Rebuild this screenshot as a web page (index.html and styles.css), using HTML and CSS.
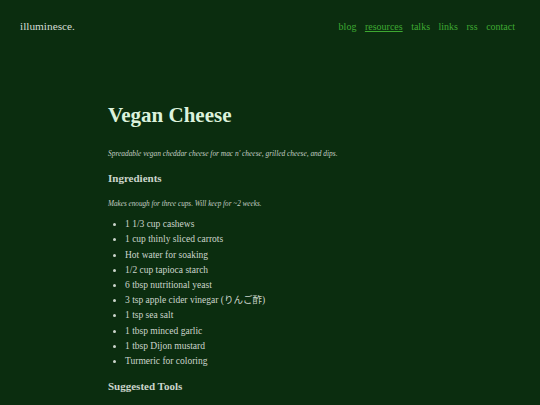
FILE: index.html
```html
<!DOCTYPE html>
<html lang="en">
<head>
<meta charset="utf-8">
<title>Vegan Cheese</title>
<link rel="stylesheet" href="styles.css">
</head>
<body>
<header class="site-header">
  <a class="logo" href="#">illuminesce.</a>
  <nav class="nav">
    <a href="#">blog</a>
    <a href="#" class="active">resources</a>
    <a href="#">talks</a>
    <a href="#">links</a>
    <a href="#">rss</a>
    <a href="#">contact</a>
  </nav>
</header>
<main class="content">
  <h1 class="title">Vegan Cheese</h1>
  <p class="lede">Spreadable vegan cheddar cheese for mac n' cheese, grilled cheese, and dips.</p>
  <h2 class="section">Ingredients</h2>
  <p class="note">Makes enough for three cups. Will keep for ~2 weeks.</p>
  <ul class="list">
    <li>1 1/3 cup cashews</li>
    <li>1 cup thinly sliced carrots</li>
    <li>Hot water for soaking</li>
    <li>1/2 cup tapioca starch</li>
    <li>6 tbsp nutritional yeast</li>
    <li>3 tsp apple cider vinegar (りんご酢)</li>
    <li>1 tsp sea salt</li>
    <li>1 tbsp minced garlic</li>
    <li>1 tbsp Dijon mustard</li>
    <li>Turmeric for coloring</li>
  </ul>
  <h2 class="section">Suggested Tools</h2>
</main>
</body>
</html>
```
FILE: styles.css
```css
html, body {
  margin: 0;
  padding: 0;
  background: #0b2d0f;
}
body {
  font-family: "Liberation Serif", "Noto Sans CJK JP", serif;
  color: #ccd5cc;
}
.site-header {
  display: flex;
  justify-content: space-between;
  align-items: baseline;
  padding: 20px 25px 0 20px;
}
.logo {
  color: #d4dcd4;
  text-decoration: none;
  font-size: 11.3px;
}
.nav {
  display: flex;
  gap: 8.5px;
}
.nav a {
  color: #3ea832;
  text-decoration: none;
  font-size: 10px;
}
.nav a.active {
  text-decoration: underline;
}
.content {
  padding: 0 0 0 108px;
  width: 330px;
}
.title {
  margin: 71px 0 0 0;
  font-size: 21px;
  font-weight: bold;
  color: #dcf2dc;
  line-height: 1.2;
}
.lede {
  margin: 21px 0 0 0;
  font-style: italic;
  font-size: 7.4px;
  color: #c4cec4;
}
.section {
  margin: 14px 0 0 0;
  font-size: 11px;
  font-weight: bold;
  color: #ccd5cc;
}
.note {
  margin: 16px 0 0 0;
  font-style: italic;
  font-size: 7.2px;
  color: #c4cec4;
}
.list {
  margin: 9px 0 0 0;
  padding-left: 17px;
  font-size: 9.5px;
  line-height: 15.2px;
}
.list + .section {
  margin-top: 11px;
}
```
